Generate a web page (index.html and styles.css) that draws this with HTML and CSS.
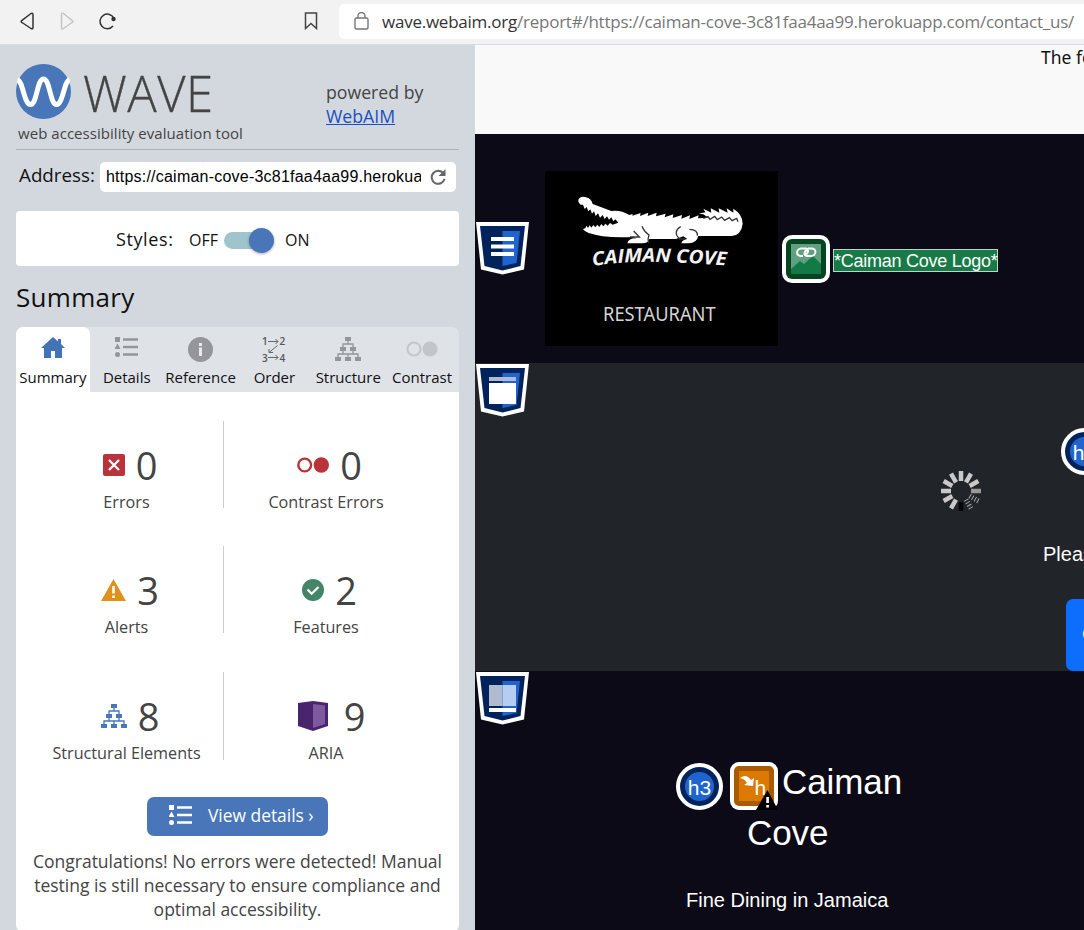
FILE: index.html
```html
<!DOCTYPE html>
<html lang="en">
<head>
<meta charset="utf-8">
<title>WAVE report</title>
<link rel="stylesheet" href="styles.css">
</head>
<body>
<svg class="defs" width="0" height="0">
  <symbol id="list" viewBox="0 0 24 20"><path d="M0 0h5v5H0zM2.500 6.500l3 5.500h-6zM8 1.200h15v2.600H8zM8 8.700h15v2.600H8zM8 16.200h15v2.600H8z"/><circle cx="2.500" cy="17.500" r="2.500"/></symbol>
  <symbol id="tree" viewBox="0 0 26 24"><path d="M10 0h6v4h-6zM5 10h6v4H5zM15 10h6v4h-6zM0 20h6v4H0zM10 20h6v4h-6zM20 20h6v4h-6z"/><path d="M13 4v3M8 10V7h10v3M8 14v3M18 14v3M3 20v-3h20v3M13 17v3" fill="none" stroke="currentColor" stroke-width="1.300"/></symbol>
  <symbol id="shield" viewBox="0 0 54 54"><path d="M1 0h53l-5 47.500-21.500 5L6 47.500z" fill="#fff"/><path d="M5 4h45l-4.500 40L27.500 48.500 9.500 44z" fill="#00235c"/><path d="M27.500 9H45l-3.500 32-14 3z" fill="#1f65cd"/></symbol>
</svg>

<header class="browser">
  <svg class="nav" width="130" height="44" viewBox="0 0 130 44" fill="none" stroke="#333" stroke-width="1.500" stroke-linejoin="round">
    <path d="M33 14.500v13q0 2-2 1l-9-6q-1.700-1 0-2.200l9-6.800q2-.8 2 1z"/>
    <path d="M61.500 14.500v13q0 2 2 1l8.500-6q1.700-1 0-2.200l-8.500-6.800q-2-.8-2 1z" stroke="#c5c5c5"/>
    <path d="M114 18.500a7.300 7.300 0 1 0-1 7.500"/><circle cx="113.500" cy="19" r="2.200" fill="#333" stroke="none"/>
  </svg>
  <svg class="bookmark" width="14" height="18" viewBox="0 0 14 18" fill="none" stroke="#444" stroke-width="1.500"><path d="M1.500 1h11v15.500L7 11.500l-5.500 5z"/></svg>
  <div class="url">
    <svg width="16" height="18" viewBox="0 0 16 18" fill="none" stroke="#777" stroke-width="1.400"><rect x="1" y="6" width="13" height="11" rx="1.500"/><path d="M4 6V4a3.500 3.500 0 0 1 7 0v2"/></svg>
    <span><b>wave.webaim.org</b>/report#/https://caiman-cove-3c81faa4aa99.herokuapp.com/contact_us/</span>
  </div>
</header>

<main>
  <aside>
    <div class="brand">
      <div class="brand-name">
        <div class="logo">
          <svg width="56" height="56" viewBox="0 0 56 56"><circle cx="27.500" cy="27.500" r="27.500" fill="#4876b8"/><path d="M1.500 16C7 17 8 40.500 14.500 40.500S21 15 27.500 15s6.500 25.500 13 25.500S48 17 53.500 16" fill="none" stroke="#fff" stroke-width="5"/></svg>
          <span>WAVE</span>
        </div>
        <p>web accessibility evaluation tool</p>
      </div>
      <div class="powered">powered by<br><a>WebAIM</a></div>
    </div>

    <div class="address">
      <span class="address-label">Address:</span>
      <div class="address-field"><span>https://caiman-cove-3c81faa4aa99.herokua</span>
        <svg width="16" height="16" viewBox="0 0 16 16" fill="none" stroke="#666" stroke-width="2"><path d="M13.500 4.500A6.500 6.500 0 1 0 14.500 10"/><path d="M15.500 0v7h-7z" fill="#666" stroke="none"/></svg>
      </div>
    </div>

    <div class="switch-card"><span class="switch-label">Styles:</span><span class="off">OFF</span><i class="toggle"></i><span class="on">ON</span></div>

    <h2>Summary</h2>

    <nav class="tabs">
      <div class="tab active"><div class="pic"><svg width="24" height="21" viewBox="0 0 24 21" fill="#4273b6"><path d="M12 0l5 4.500V2h3v5l4 4h-3v10h-7v-7h-4v7H3V11H0z"/></svg></div>Summary</div>
      <div class="tab"><div class="pic faded"><svg width="24" height="20"><use href="#list"/></svg></div>Details</div>
      <div class="tab"><div class="pic low"><svg width="25" height="25" viewBox="0 0 25 25"><circle cx="12.500" cy="12.500" r="12.500" fill="#949699"/><path d="M11 10.500h3V19h-3zM11 6h3v3h-3z" fill="#e8eaed"/></svg></div>Reference</div>
      <div class="tab"><div class="pic low"><svg class="order" width="25" height="25" viewBox="0 0 25 25"><g font-family="Open Sans" font-size="10" font-weight="600" fill="#555"><text x="0" y="8">1</text><text x="17.500" y="8">2</text><text x="0" y="24.500">3</text><text x="17.500" y="24.500">4</text></g><path d="M6 4.500h10M13.500 2l2.500 2.500L13.500 7M6 20.500h10M13.500 18l2.500 2.500-2.500 2.500M15.500 8.500L7 15.500M7 12v3.500h4" fill="none" stroke="#666" stroke-width="1"/></svg></div>Order</div>
      <div class="tab"><div class="pic faded low"><svg width="26" height="24"><use href="#tree"/></svg></div>Structure</div>
      <div class="tab"><div class="pic low"><svg width="32" height="16" viewBox="0 0 32 16"><circle cx="8" cy="8" r="6.500" fill="none" stroke="#c3c5c8" stroke-width="2"/><circle cx="24" cy="8" r="7.500" fill="#c3c5c8"/></svg></div>Contrast</div>
    </nav>

    <section class="report">
      <div class="stats">
        <div class="stat"><div class="count"><svg width="22" height="22" viewBox="0 0 22 22"><rect width="22" height="22" rx="2" fill="#b9343a"/><path d="M6 6l10 10M16 6L6 16" stroke="#fff" stroke-width="2.300"/></svg><b>0</b></div>Errors</div>
        <div class="stat"><div class="count"><svg width="32" height="16" viewBox="0 0 32 16"><circle cx="7.700" cy="8" r="6.400" fill="none" stroke="#b9343a" stroke-width="2.400"/><circle cx="24.300" cy="8" r="7.700" fill="#b9343a"/></svg><b>0</b></div>Contrast Errors</div>
        <div class="stat"><div class="count"><svg width="25" height="22" viewBox="0 0 25 22"><path d="M12.500 0L25 22H0z" fill="#de911d"/><path d="M11.200 7h2.600v7.500h-2.600zM11.200 16.500h2.600v2.600h-2.600z" fill="#fff"/></svg><b>3</b></div>Alerts</div>
        <div class="stat"><div class="count"><svg width="22" height="22" viewBox="0 0 22 22"><circle cx="11" cy="11" r="11" fill="#458567"/><path d="M5.500 10.500l4.200 4.200L16.500 8" fill="none" stroke="#fff" stroke-width="2.200"/></svg><b>2</b></div>Features</div>
        <div class="stat"><div class="count tree"><svg width="26" height="24"><use href="#tree"/></svg><b>8</b></div>Structural Elements</div>
        <div class="stat"><div class="count wide"><svg width="30" height="30" viewBox="0 0 30 30"><path d="M0 2L15 0l15 2v23l-15 5L0 25z" fill="#49256e"/><path d="M15 3l12 1.500V23l-12 4z" fill="#7e59a0"/></svg><b>9</b></div>ARIA</div>
      </div>
      <div class="button"><svg width="24" height="20"><use href="#list"/></svg><span>View details ›</span></div>
      <p class="message">Congratulations! No errors were detected! Manual<br>testing is still necessary to ensure compliance and<br>optimal accessibility.</p>
    </section>
  </aside>

  <div class="page">
    <div class="notice">The following</div>

    <div class="hero">
      <svg class="mark" width="54" height="54"><use href="#shield"/><path d="M16 15h23v4H16zM16 22.500h23v4H16zM16 30h23v4H16z" fill="#fff"/></svg>
      <svg class="caiman" width="233" height="175" viewBox="15 18 699 525">
        <path d="M15 18h699v525H15z" fill="#000"/>
        <path d="M116 102Q124 92 138 97 154 100 158 117L214 138Q242 134 268 150L278 147 277 152 302 144 300 153 325 143 323 153 350 143 348 154 377 146 374 157 400 148 398 159 426 150 424 161 450 151 448 162 476 151 474 160 505 158 490 148 476 146 496 142 490 131 514 143 512 130 538 143 536 130 563 143 560 130 580 143 580 131Q608 148 608 176 604 210 575 213L475 213Q470 235 446 235H424Q426 224 442 222L430 214 408 222 328 222Q325 235 306 235H262Q266 219 290 220L278 216Q190 220 146 204 134 200 129 192L136 190 139 182 144 189 149 181 154 188 160 180 166 187 172 179 178 186 184 177 190 184 196 176 203 182 210 174 218 179 235 173 226 163 220 169 214 157 207 164 201 154 194 162 188 150 180 158 174 145 167 153 162 139 156 146 151 133 145 139 140 126 134 132 129 119 122 119Q112 111 116 102Z" fill="#fff"/>
        <path d="M306 184Q312 200 327 210 322 222 326 234M281 198L298 216H270M422 185Q397 201 419 222H436M448 193Q474 194 472 212M490 160L504 155 510 163 524 154 532 164 545 156 554 166 568 158 576 167 590 160 594 170" fill="none" stroke="#333" stroke-width="4"/>
        <path id="arc" d="M158 303Q270 287 370 291T570 302" fill="none"/>
        <text font-family="Open Sans" font-size="57" font-style="italic" font-weight="700" fill="#f3f3f3"><textPath href="#arc" textLength="402" lengthAdjust="spacingAndGlyphs">CAIMAN COVE</textPath></text>
        <text x="189" y="467" font-family="Noto Sans" font-size="57" fill="#d5d5d5" textLength="338" lengthAdjust="spacingAndGlyphs">RESTAURANT</text>
      </svg>
      <svg class="badge" width="48" height="48" viewBox="0 0 48 48"><rect width="48" height="48" rx="10" fill="#fff"/><rect x="4" y="4" width="40" height="40" rx="6" fill="#054522"/><path d="M9 9h30v30H9z" fill="#60a07f"/><path d="M9 34l9-8 4 3 9-8 8 8v10H9z" fill="#117a47"/><path d="M21 21h-2.500q-3.500-.5-3.500-3.500t3.500-4h5q3 0 2.500 3t-4 3M26 13.500h4q3.500.5 3.500 3.500t-3.500 4h-5q-3 0-2.500-3t4-3" fill="none" stroke="#fff" stroke-width="1.800"/></svg>
      <span class="alt">*Caiman Cove Logo*</span>
    </div>

    <div class="contact">
      <svg class="mark" width="54" height="54"><use href="#shield"/><path d="M14 13h27v4H14z" fill="#aebbd4"/><path d="M14 19h27v21H14z" fill="#fff"/></svg>
      <svg class="spinner" width="42" height="42" viewBox="-21 -21 42 42" stroke="#c9c9c9" stroke-width="4.500">
        <path d="M0-20v10"/><path d="M0-20v10" transform="rotate(30)"/><path d="M0-20v10" transform="rotate(60)"/><path d="M0-20v10" transform="rotate(90)" stroke="#999"/>
        <g stroke="#aaa" stroke-width="5" stroke-dasharray="1 2"><path d="M0-20v10" transform="rotate(120)"/><path d="M0-20v10" transform="rotate(150)"/></g>
        <path d="M0-20v9" transform="rotate(180)" stroke="#050505"/><path d="M0-20v10" transform="rotate(210)"/><path d="M0-20v10" transform="rotate(240)"/><path d="M0-20v10" transform="rotate(270)"/><path d="M0-20v10" transform="rotate(300)"/><path d="M0-20v10" transform="rotate(330)"/>
      </svg>
      <div class="form">
        <span class="level">h3</span>
        <p>Please</p>
        <div class="cta">C</div>
      </div>
    </div>

    <div class="footer">
      <svg class="mark" width="54" height="54"><use href="#shield"/><path d="M14 13h13.500v21H14z" fill="#b0bbd0"/><path d="M27.500 13H41v21H27.500z" fill="#b5cdf0"/><path d="M14 36h27v4H14z" fill="#fff"/></svg>
      <div class="title">
        <span class="level">h3</span>
        <svg width="48" height="48" viewBox="0 0 48 48"><rect width="48" height="48" rx="9" fill="#fff"/><rect x="4" y="4" width="40" height="40" rx="5" fill="#a95b00"/><path d="M9 9h30v30H9z" fill="#db7900"/><path d="M10 16q6-5 11 2l3-2-1 8-9-1 3-2q-2-4-7-5z" fill="#fff"/><text x="24.500" y="33" font-family="Liberation Sans" font-size="21" fill="#fff">h</text><path d="M37.500 28L48 48H26z" fill="#000"/><path d="M36.300 35h2.600v6h-2.600zM36.300 43h2.600v2.600h-2.600z" fill="#fff"/></svg>
        <span class="caiman-word">Caiman</span>
      </div>
      <div class="cove">Cove</div>
      <p>Fine Dining in Jamaica</p>
    </div>
  </div>
</main>
</body>
</html>
```

FILE: styles.css
```css
* { box-sizing: border-box; }
body { margin: 0; height: 930px; overflow: hidden; font-family: "Open Sans", sans-serif; color: #111; background: #d3d8df; }
p, h2 { margin: 0; }
svg { display: block; flex: none; }
.defs { position: absolute; }
.order { overflow: visible; }

.browser { display: flex; height: 45px; background: #f2f2f2; border-bottom: 1px solid #d9dce0; }
.bookmark { margin: 12px 0 0 174px; }
.url { display: flex; gap: 12px; flex: 1; min-width: 0; height: 35px; margin: 4px 0 0 21px; padding-left: 15px; background: #fff; border-radius: 5px 0 0 5px; font-size: 17px; line-height: 35px; letter-spacing: -.24px; color: #777; white-space: nowrap; }
.url svg { margin-top: 8px; }
.url b { font-weight: 400; color: #333; }

main { display: flex; height: 885px; }
aside { width: 475px; flex: none; padding: 0 16px; background: #d3d8df; }

.brand { display: flex; height: 105px; border-bottom: 1px solid #adb2bd; color: #444; }
.brand-name { width: 310px; padding-top: 19px; }
.logo { display: flex; height: 56px; gap: 11px; }
.logo span { font-size: 49px; line-height: 58px; font-weight: 300; letter-spacing: .5px; -webkit-text-stroke: .3px #444; }
.brand-name p { margin: 3px 0 0 2px; font-size: 15px; line-height: 20px; letter-spacing: .04px; white-space: nowrap; }
.powered { padding-top: 35px; font-size: 17.700px; line-height: 24px; }
.powered a { color: #1a4fc4; text-decoration: underline; }

.address { display: flex; margin-top: 12px; height: 30px; }
.address-label { width: 84px; padding-left: 3px; font-size: 18.800px; line-height: 26px; }
.address-field { display: flex; width: 356px; padding-left: 6px; background: #fff; border-radius: 5px; }
.address-field span { width: 315px; overflow: hidden; font: 16px/30px "Liberation Sans", sans-serif; letter-spacing: .22px; white-space: nowrap; color: #000; }
.address-field svg { margin: 7px 0 0 9px; }

.switch-card { display: flex; align-items: center; height: 55px; margin-top: 19px; padding: 2px 0 0 100px; background: #fff; border-radius: 4px; font-size: 16px; width: 443px; }
.switch-label { width: 73px; font-size: 18px; letter-spacing: .6px; padding-bottom: 2px; }
.off { width: 35px; }
.toggle { width: 42px; height: 17px; border-radius: 9px; background: #9fc4cb; margin-top: 2px; position: relative; }
.toggle::after { content: ""; position: absolute; left: 25px; top: -4px; width: 25px; height: 25px; border-radius: 50%; background: #4876b8; box-shadow: 0 1px 3px #0005; }
.on { margin-left: 19px; }

h2 { height: 61px; padding-top: 12px; font-size: 26px; line-height: 38px; font-weight: 400; letter-spacing: .3px; }

.tabs { display: flex; width: 443px; height: 65px; background: #dfe2e7; border-radius: 7px 7px 0 0; }
.tab { flex: 1 1 0; min-width: 0; display: flex; flex-direction: column; align-items: center; font-size: 15px; line-height: 20px; white-space: nowrap; }
.active { background: #fff; border-radius: 7px 7px 0 0; }
.pic { display: flex; height: 40px; align-items: center; }
.low { padding-top: 4px; }
.faded { color: #949699; fill: #949699; }

.report { width: 443px; height: 540px; padding-top: 29px; background: #fff; border-radius: 0 0 7px 7px; color: #444; }
.stats { display: grid; grid-template-columns: 194px 204px; grid-template-rows: 87px 87px 88px; row-gap: 38.400px; margin-left: 14px; }
.stat { text-align: center; font-size: 16.200px; line-height: 24px; padding-top: 19px; }
.stat:nth-child(odd) { border-right: 1px solid #ccc; }
.count { display: flex; justify-content: center; align-items: center; gap: 11px; height: 50px; padding-left: 7px; }
.wide { gap: 16px; padding-left: 11px; }
.count b { font-size: 38px; line-height: 49px; font-weight: 400; margin-top: 1px; }
.tree { color: #4876b8; fill: #4876b8; }
.tree b { color: #444; }
.button { display: flex; align-items: center; width: 181px; height: 39px; margin: 37.200px 0 0 131px; padding: 0 0 2px 22px; background: #4876b8; border-radius: 7px; color: #fff; fill: #fff; font-size: 17.400px; gap: 15px; white-space: nowrap; }
.message { margin-top: 13px; text-align: center; font-size: 17.500px; line-height: 24px; white-space: nowrap; }

.page { flex: 1; min-width: 0; overflow: hidden; background: #0d0a17; color: #fff; font-family: "Liberation Sans", sans-serif; }
.notice { height: 89px; padding: 0 0 0 566px; background: #f9f9f9; color: #111; font: 17.500px/24px "Noto Sans", sans-serif; white-space: nowrap; }
.mark { position: absolute; left: 0; top: 0; }
.hero, .contact, .footer { position: relative; display: flex; }
.hero { height: 229px; padding: 37px 0 0 70px; }
.hero .mark { top: 88px; }
.contact .mark, .footer .mark { top: 1px; }
.badge { margin: 64px 0 0 4px; }
.alt { height: 23px; margin: 78px 0 0 3px; border: 1px solid #b9d6c6; background: #187a46; font-size: 18px; letter-spacing: -.26px; line-height: 22px; white-space: nowrap; }
.contact { height: 308px; background: #212529; }
.spinner { margin: 107px 0 0 465px; }
.form { padding: 65px 0 0 61px; white-space: nowrap; }
.level { display: block; flex: none; width: 47px; height: 47px; border: 4px solid #fff; border-radius: 50%; box-shadow: inset 0 0 0 5px #00235c; background: #1f65cd; text-align: center; font-size: 21px; line-height: 41px; }
.form .level { margin-left: 18px; }
.form p { margin-top: 67px; font-size: 20px; line-height: 24px; }
.cta { width: 100px; height: 72px; margin: 33px 0 0 23px; padding-left: 16px; background: #0d6efd; border-radius: 7px; font-size: 20px; line-height: 70px; }
.footer { flex-direction: column; height: 259px; padding-top: 91px; }
.title { display: flex; align-items: center; gap: 7px; height: 48px; padding-left: 201px; }
.caiman-word, .cove { font-size: 35px; line-height: 48px; letter-spacing: -.1px; }
.caiman-word { margin: -8px 0 0 -3px; }
.cove { padding-left: 272px; margin-top: -1px; }
.footer p { margin: 31px 0 0 211px; font-size: 20px; line-height: 24px; }
```
